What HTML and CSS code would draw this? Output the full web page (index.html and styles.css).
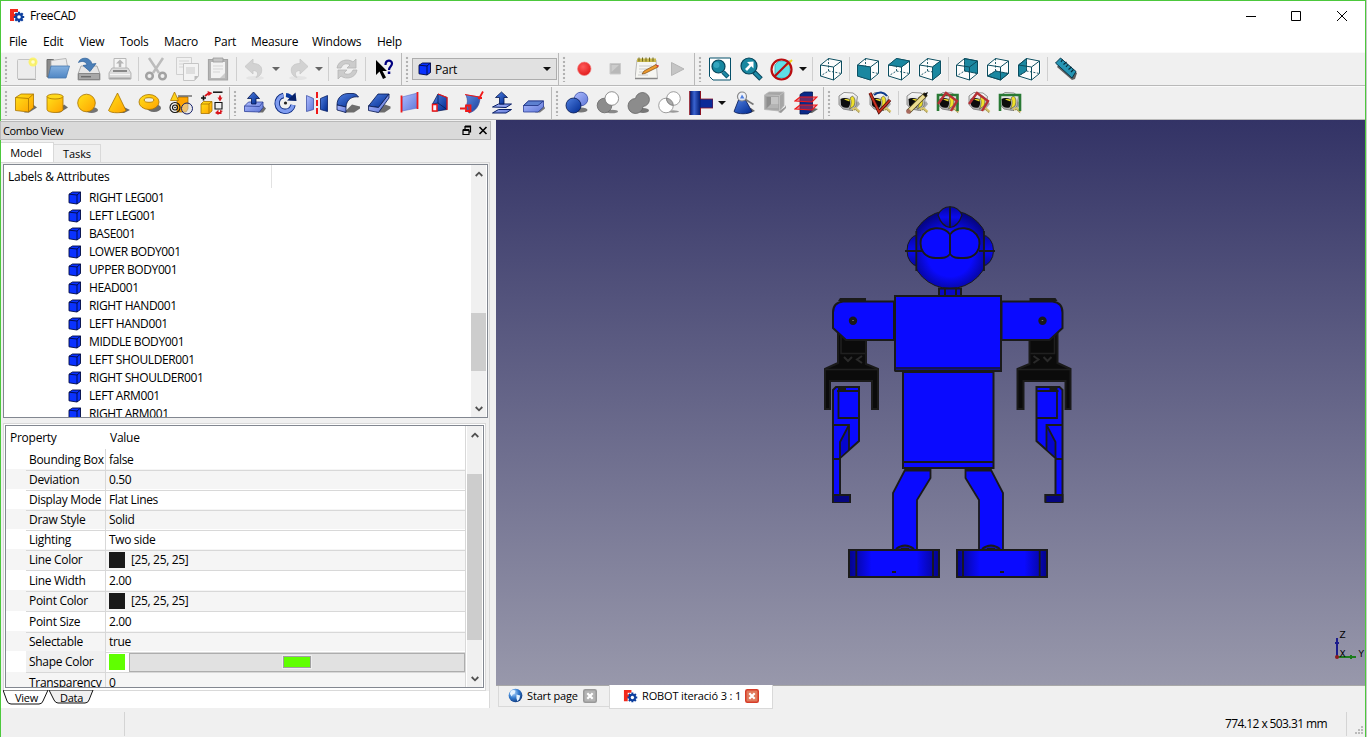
FILE: index.html
```
<!DOCTYPE html>
<html lang="en">
<head>
<meta charset="utf-8">
<title>FreeCAD</title>
<link rel="stylesheet" href="styles.css">
</head>
<body>
<svg class="defs" aria-hidden="true">
  <defs>
    <linearGradient id="gy" x1="0" y1="0" x2="1" y2="1"><stop offset="0" stop-color="#ffe21a"/><stop offset="1" stop-color="#ffa200"/></linearGradient>
    <linearGradient id="gb" x1="0" y1="0" x2="1" y2="1"><stop offset="0" stop-color="#4f7fe0"/><stop offset="1" stop-color="#002a90"/></linearGradient>
    <linearGradient id="gl" x1="0" y1="0" x2="1" y2="1"><stop offset="0" stop-color="#aebcff"/><stop offset="1" stop-color="#5f77d6"/></linearGradient>
    <linearGradient id="gf" x1="0" y1="0" x2="0" y2="1"><stop offset="0" stop-color="#84b1e0"/><stop offset="1" stop-color="#4f86c4"/></linearGradient>
    <linearGradient id="gw" x1="0" y1="0" x2="0" y2="1"><stop offset="0" stop-color="#ffffff"/><stop offset="1" stop-color="#a6a6a6"/></linearGradient>
    <linearGradient id="pipe" x1="0" y1="0" x2="1" y2="0"><stop offset="0" stop-color="#001a70"/><stop offset=".4" stop-color="#3a63d0"/><stop offset="1" stop-color="#001a70"/></linearGradient>
    <radialGradient id="head" gradientUnits="userSpaceOnUse" cx="950" cy="254" r="45"><stop offset="0" stop-color="#0a0aff"/><stop offset=".5" stop-color="#0a0aff"/><stop offset="1" stop-color="#04046a"/></radialGradient>
    <linearGradient id="ear" x1="0" y1="0" x2="0" y2="1"><stop offset="0" stop-color="#0606a0"/><stop offset=".5" stop-color="#0a0aee"/><stop offset="1" stop-color="#0606a0"/></linearGradient>
    <linearGradient id="foot" x1="0" y1="0" x2="1" y2="0"><stop offset="0" stop-color="#040488"/><stop offset=".25" stop-color="#0a0aff"/><stop offset=".75" stop-color="#0a0aff"/><stop offset="1" stop-color="#040488"/></linearGradient>
    <radialGradient id="globe" cx=".35" cy=".3" r=".8"><stop offset="0" stop-color="#b8dcff"/><stop offset=".5" stop-color="#2f78cc"/><stop offset="1" stop-color="#0c2f70"/></radialGradient>
    <radialGradient id="grec" cx=".4" cy=".35" r=".7"><stop offset="0" stop-color="#ff5a5a"/><stop offset="1" stop-color="#e01818"/></radialGradient>
  </defs>
  <symbol id="logo" viewBox="0 0 16 16"><path d="M1 1h8v3H5v2h3v3H5v4H1z" fill="#f22a1c"/><g stroke="#0d3f9e" stroke-width="2.200"><path d="M10 3.800v10.400M4.800 9h10.400M6.300 5.300l7.400 7.400M13.700 5.300l-7.400 7.400"/></g><circle cx="10" cy="9" r="3.900" fill="#0d3f9e"/><circle cx="10" cy="9" r="1.800" fill="#fff"/></symbol>
  <symbol id="cube-s" viewBox="0 0 14 14"><path d="M1 3.200L4.500 1h8v9.500L9 13l-8-1.200z" fill="#0a32ff"/><path d="M1 3.200L4.500 1h8v9.500L9 13l-8-1.200zM1 3.200L9 4l3.500-3M9 4v9" fill="none" stroke="#000a40" stroke-width=".9"/></symbol>

  <symbol id="new" viewBox="0 0 24 24"><rect x="2.500" y="2.500" width="18" height="19.500" rx="1" fill="#ececec" stroke="#c4c4c4"/><path d="M3 22.500h18" stroke="#aaa"/><circle cx="18" cy="5" r="4.500" fill="#fdf35a" opacity=".85"/><circle cx="18" cy="5" r="1.800" fill="#fffdd0"/></symbol>
  <symbol id="open" viewBox="0 0 24 24"><path d="M1 20V2.500h6.500l1 1.500h9v16z" fill="#8a8a8a" stroke="#6c6c6c"/><path d="M5 3.500l15-2 1.500 8H5z" fill="#ececec" stroke="#aaa" stroke-width=".8"/><path d="M5 9h18.500L20 21H2z" fill="url(#gf)" stroke="#4677ac" stroke-width=".8"/></symbol>
  <symbol id="save" viewBox="0 0 24 24"><path d="M4 9h16l3 8v6H1v-6z" fill="#e6e6e6" stroke="#999" stroke-width=".8"/><path d="M1.500 16.500h21V22.500h-21z" fill="#a8a8a8" stroke="#777" stroke-width=".8"/><path d="M4 19.800h10" stroke="#555"/><path d="M1.500 5.500C3 0 13-1 15 7l4-.5-6 8-7-6 4-.7C9 4.500 5 3.500 1.500 5.500z" fill="#4b7fb8" stroke="#2d5f98" stroke-width=".7"/></symbol>
  <symbol id="print" viewBox="0 0 24 24"><path d="M6 1.500h12v10H6z" fill="#f5f5f5" stroke="#b8b8b8"/><path d="M12 10V5" stroke="#b5b5b5" stroke-width="2.500"/><path d="M8 6.500L12 2.500l4 4z" fill="#b5b5b5"/><path d="M4 11h16l3 5v6H1v-6z" fill="#dcdcdc" stroke="#aaa" stroke-width=".8"/><path d="M5 14h14" stroke="#888" stroke-width="2"/><path d="M2 17.500h20" stroke="#f5f5f5"/><path d="M1.500 20.500h21v1.800h-21z" fill="#a5a5a5"/></symbol>
  <symbol id="cut" viewBox="0 0 24 24"><path d="M5 1l10 15M19 1L9 16" stroke="#bcbcbc" stroke-width="2.500"/><ellipse cx="5.500" cy="19" rx="3.300" ry="3.200" fill="none" stroke="#a2a2a2" stroke-width="2.500"/><ellipse cx="18.500" cy="19" rx="3.300" ry="3.200" fill="none" stroke="#a2a2a2" stroke-width="2.500"/></symbol>
  <symbol id="copy" viewBox="0 0 24 24"><path d="M1.500.5h15v17h-15z" fill="#f1f1f1" stroke="#d0d0d0"/><path d="M4 4h10M4 7h4M4 10h4" stroke="#d5d5d5"/><path d="M8.500 6.500h15V19l-4 4.500h-11z" fill="#f3f3f3" stroke="#c5c5c5"/><path d="M11 10h9v7h-9z" fill="#dedede"/><path d="M19.500 23.500V19h4z" fill="#bbb"/></symbol>
  <symbol id="paste" viewBox="0 0 24 24"><path d="M2.500 2.500h19v20.500h-19z" fill="#b6b6b6" stroke="#a5a5a5" stroke-width="1.200"/><path d="M5 5h14v16H5z" fill="#f2f2f2"/><path d="M7 1h10v4H7z" fill="#c5c5c5" stroke="#999" stroke-width=".8"/><path d="M7 9h10M7 12h10M7 15h7" stroke="#d5d5d5"/><path d="M14 21l5-5v5z" fill="#ccc"/></symbol>
  <symbol id="undo" viewBox="0 0 24 24"><ellipse cx="12" cy="21" rx="9" ry="2" fill="#e4e4e4"/><path d="M2 9.500L10 2v4.500c8 0 10 5 8 10-1 2-3 3.500-5 4 2-2 3-7-3-7V17z" fill="#d2d2d2" stroke="#c6c6c6" stroke-width=".8"/></symbol>
  <symbol id="refresh" viewBox="0 0 24 24"><path d="M2 11C3 3 13 1 18 5l3-3v9h-9l3-3c-4-3-8 0-9 3z" fill="#ccc" stroke="#b5b5b5" stroke-width=".8"/><path d="M22 13c-1 8-11 10-16 6l-3 3v-9h9l-3 3c4 3 8 0 9-3z" fill="#ccc" stroke="#b5b5b5" stroke-width=".8"/></symbol>
  <symbol id="whats" viewBox="0 0 24 24"><path d="M4 3v15l3.500-3.500L11 22l3-1.500-3.500-6.500H15z" fill="#000"/><path d="M13.500 8c0-5.500 6.500-5.500 6.500-1.500 0 3-3 3-3 6.500" fill="none" stroke="#000080" stroke-width="2.200"/><path d="M15.800 14.500h2.500V17h-2.500z" fill="#000080"/></symbol>
  <symbol id="rec" viewBox="0 0 24 24"><circle cx="11.300" cy="11.800" r="6.700" fill="url(#grec)" stroke="#f47c7c" stroke-width=".7"/></symbol>
  <symbol id="stop" viewBox="0 0 24 24"><path d="M6 6.500h10.500V17H6z" fill="#b8b8b8" stroke="#cbcbcb"/><path d="M7.500 8h7.500l-7.500 7z" fill="#ccc"/></symbol>
  <symbol id="note" viewBox="0 0 24 24"><path d="M2 3h19l1.500 18.500H0z" fill="#f6f6f2" stroke="#aaa" stroke-width=".8"/><path d="M2 1.500h19V5H2z" fill="#c8b84c"/><path d="M4 .5v4M7.500.5v4M11 .5v4M14.500.5v4M18 .5v4" stroke="#6e671f"/><path d="M4 9h13M4 12h11M4 15h6M3 18h10" stroke="#ccc"/><path d="M0 21.500h22.500" stroke="#888" stroke-width="1.500"/><path d="M21 7.500l2 2.500-13 6.500-3 .5 2-3z" fill="#ee9a2c" stroke="#7a4a12" stroke-width=".7"/><path d="M20.500 7.500L23 10.500l1-2z" fill="#d43a3a"/></symbol>
  <symbol id="play" viewBox="0 0 24 24"><path d="M5.500 5.500L18 12 5.500 18.500z" fill="#c5c5c5" stroke="#b5b5b5"/></symbol>
  <symbol id="fit" viewBox="0 0 24 24"><path d="M1.500 1h21v22H5l-3.500-3.500z" fill="#fff" stroke="#05506a" stroke-width="1"/><path d="M15 15l5 5" stroke="#05506a" stroke-width="4.500"/><path d="M15 15l4.500 4.500" stroke="#1f8aa5" stroke-width="2.500"/><circle cx="10.500" cy="9.500" r="6.500" fill="#1787a0" stroke="#05445a" stroke-width="1.200"/><circle cx="8.500" cy="8" r="3" fill="#45b4cc" opacity=".7"/></symbol>
  <symbol id="fits" viewBox="0 0 24 24"><path d="M15 15l7 7" stroke="#05445a" stroke-width="5"/><path d="M15.500 15.500l6 6" stroke="#1f8aa5" stroke-width="3"/><circle cx="10" cy="9" r="8" fill="#1787a0" stroke="#05445a" stroke-width="1.200"/><path d="M14.500 4.500v7l-2.200-2.200L8 14l-2-2 4.500-4.500L8 5z" fill="#fff"/></symbol>
  <symbol id="draws" viewBox="0 0 24 24"><path d="M5 8l4-4h11v13l-4 4H5z" fill="#5fdfe8" stroke="#3aa8b4" stroke-width=".8"/><path d="M16 9l6-6" stroke="#f4d822" stroke-width="2"/><circle cx="11.500" cy="12.500" r="10" fill="none" stroke="#b90d10" stroke-width="2.200"/><path d="M4.500 19.500L18.500 5.500" stroke="#b90d10" stroke-width="2.200"/></symbol>
  <symbol id="wire" viewBox="0 0 24 24"><path d="M9.500 1.500V14l-8 5M9.500 14l13 2.500" fill="none" stroke="#0b4c5e" stroke-width=".9" stroke-dasharray="2 1.500"/><path d="M1.500 8l13 2v13l-13-4zM9.500 1.500l13 2.500-8 6M1.500 8l8-6.500M22.500 4v12.500l-8 6.500" fill="none" stroke="#0b4c5e"/></symbol>
  <symbol id="ruler" viewBox="0 0 24 24"><path d="M3 10l4-6 16 12-2 6-3 1z" fill="#111" opacity=".65"/><path d="M1.500 6L6.500 1 22 14.500 18 21z" fill="#2695b4" stroke="#08374a"/><path d="M7 5l1.500-2.500M9.500 7.500L12.500 5M12 10l2-2.500M14.500 12.500l3-2.500M17 15l2.500-2.500" stroke="#062a38" stroke-width="1.100"/></symbol>

  <symbol id="box" viewBox="0 0 24 24"><path d="M10 21.500l9-8 4 3-8 5z" fill="#555" opacity=".85"/><path d="M1.500 6.500L7 3h12.500v13.500l-5 4.500-13-1.500z" fill="url(#gy)" stroke="#a87400" stroke-width=".8"/><path d="M1.500 6.500l13 1L19.500 3M14.500 7.500V21" fill="none" stroke="#a87400" stroke-width=".8"/></symbol>
  <symbol id="cyl" viewBox="0 0 24 24"><path d="M11 21.500l8-8 4 3-8 5z" fill="#555" opacity=".85"/><path d="M2 5.500v13c0 4 16 4 16 0v-13z" fill="url(#gy)" stroke="#a87400" stroke-width=".8"/><ellipse cx="10" cy="5.500" rx="8" ry="2.500" fill="#ffd81a" stroke="#a87400" stroke-width=".8"/></symbol>
  <symbol id="sph" viewBox="0 0 24 24"><ellipse cx="15.500" cy="19" rx="6.500" ry="3" fill="#555" opacity=".8"/><circle cx="10.500" cy="12" r="8.800" fill="url(#gy)" stroke="#a87400" stroke-width=".8"/></symbol>
  <symbol id="cone" viewBox="0 0 24 24"><path d="M12 22l5-6 6 3-6 3z" fill="#555" opacity=".85"/><path d="M10.500 2L1.500 19.500c2 3 15 3 17.500 0z" fill="url(#gy)" stroke="#a87400" stroke-width=".8"/></symbol>
  <symbol id="torus" viewBox="0 0 24 24"><ellipse cx="16" cy="17" rx="7" ry="4" fill="#555" opacity=".85"/><ellipse cx="11" cy="11" rx="10" ry="7.500" fill="url(#gy)" stroke="#a87400" stroke-width=".8"/><ellipse cx="11" cy="9" rx="4.800" ry="2.300" fill="#f1efe0" stroke="#a87400" stroke-width=".8"/></symbol>
  <symbol id="prims" viewBox="0 0 24 24"><path d="M8 7.500L10 6h9v12l-2 3H8z" fill="#ffa400" stroke="#8a5e00" stroke-width=".7"/><path d="M5.500 1L1.500 9.500h8z" fill="#ffd21a" stroke="#a87400" stroke-width=".8"/><path d="M9 5h14" stroke="#333"/><circle cx="6" cy="16.500" r="5" fill="none" stroke="#111" stroke-width="1.100"/><circle cx="6" cy="16.500" r="2.500" fill="none" stroke="#111" stroke-width="1.100"/><circle cx="6" cy="16.500" r=".8"/><circle cx="18" cy="17.500" r="5.500" fill="#ddd" fill-opacity=".5" stroke="#15206a"/></symbol>
  <symbol id="builder" viewBox="0 0 24 24"><path d="M1 13l2.500-2.500H12v9.500L9 22.500H1z" fill="url(#gy)" stroke="#a87400" stroke-width=".8"/><path d="M1 13h8l3-2.500M9 13v9.500" fill="none" stroke="#a87400" stroke-width=".8"/><path d="M3.500 4.500v5M1 7h5" stroke="#111" stroke-width="1.600"/><path d="M5 5l4-3M20 4.500v4M21.500 22h-4" stroke="#d8151c" stroke-width="1.800"/><path d="M7.500 0l5 2-4 3zM17.500 6.500h5L20 10.500zM18.500 18.500V24L15 22zM20 19l3 1-3 2z" fill="#d8151c"/><path d="M13 1.200h9.500" stroke="#111" stroke-width="1.500"/><path d="M15 11.500h7V18h-7z" fill="none" stroke="#111" stroke-width="1.100"/></symbol>
  <symbol id="extrude" viewBox="0 0 24 24"><path d="M15 21.500l5-7 3 3-3 4z" fill="#555" opacity=".85"/><path d="M1.500 15l4-4H20v5.500l-3.500 4.500-15-.5z" fill="url(#gl)" stroke="#2c3f98" stroke-width=".8"/><path d="M1.500 15l15 .5L20 11" fill="none" stroke="#2c3f98" stroke-width=".8"/><path d="M10.500 1l6 6.500H13V13H8.500V7.500H4.500z" fill="url(#gb)" stroke="#04154e" stroke-width=".8"/></symbol>
  <symbol id="revolve" viewBox="0 0 24 24"><path d="M9.500 4.500A8 8 0 1 0 19 14" fill="none" stroke="#0b2a80" stroke-width="5.500"/><path d="M9.500 4.500A8 8 0 1 0 19 14" fill="none" stroke="#7f9cf0" stroke-width="3.700"/><path d="M12 4a8 8 0 0 1 6.500 4.500" fill="none" stroke="#0b3aa0" stroke-width="4"/><path d="M13 9.500l8.500-8L22.500 10z" fill="#05206a"/><circle cx="11.500" cy="12" r="1.600" fill="#222"/></symbol>
  <symbol id="mirror" viewBox="0 0 24 24"><path d="M1.500 4.500l7 3v11l-7 2z" fill="url(#gl)" stroke="#4054a8" stroke-width=".8"/><path d="M22.500 4.500l-7 3v11l7 2z" fill="url(#gb)" stroke="#081f66" stroke-width=".8"/><path d="M12 1v6m0 2v6m0 2v6" stroke="#f01818" stroke-width="2"/></symbol>
  <symbol id="fillet" viewBox="0 0 24 24"><path d="M8 21.500l8-8 8 2v2l-6 4z" fill="#555" opacity=".85"/><path d="M1 14C1 6 7 2.500 12 2.500h5c2 0 4 1 5.500 3.500-6-1-12 2-12.500 10z" fill="url(#gb)" stroke="#04154e" stroke-width=".8"/><path d="M1 14l9 2v5.500l-9-2.500z" fill="url(#gl)" stroke="#04154e" stroke-width=".8"/></symbol>
  <symbol id="chamfer" viewBox="0 0 24 24"><path d="M9 21.500l9-8 5.500 2v2l-6 4z" fill="#555" opacity=".85"/><path d="M1.500 15L11 3h11L11.500 16.500z" fill="url(#gb)" stroke="#04154e" stroke-width=".8"/><path d="M1.500 15l10 1.500L22 3v4L11.500 21.500l-10-2z" fill="url(#gl)" stroke="#04154e" stroke-width=".8"/></symbol>
  <symbol id="face" viewBox="0 0 24 24"><path d="M4 6l15.500-4v15L4 20z" fill="url(#gl)" stroke="#5b6fc8" stroke-width=".6"/><path d="M3.500 4.500v17M19.500 1v17" stroke="#f01818" stroke-width="1.800"/></symbol>
  <symbol id="loft" viewBox="0 0 24 24"><path d="M3.500 13L9 3l9 3.500v12L8.500 20h-5z" fill="url(#gb)" stroke="#04154e" stroke-width=".7"/><path d="M9 3v9L3.500 13M9 12l9 6.500" fill="none" stroke="#04154e" stroke-width=".7"/><path d="M18 6v13M9 3l9 3.500" stroke="#f01818" stroke-width="1.200"/><path d="M3.500 13.500H8V20H3.500z" fill="#f6f6ff" stroke="#f01818" stroke-width="1.500"/></symbol>
  <symbol id="sweep" viewBox="0 0 24 24"><path d="M6 4l14 2c0 8-4 14-11 16l-4-6c3-3 3-7 1-12z" fill="url(#gb)" stroke="#2a3f90" stroke-width=".7" opacity=".9"/><path d="M5 3.500l14 2.500M9.500 22l-1-8" stroke="#f01818"/><path d="M0 17.500h5m1-3h4.500V20H6zM19 8l1.500-3L23 .5M18 7h4" fill="none" stroke="#f01818" stroke-width="1.800"/></symbol>
  <symbol id="offset" viewBox="0 0 24 24"><path d="M1.500 22l6-3.500h13L15 22zM1.500 16l6-3h13L15 16.500z" fill="url(#gl)" stroke="#081f66"/><path d="M10.500 1l6 5.500H13V13H8.500V6.500H4.500z" fill="url(#gb)" stroke="#04154e" stroke-width=".8"/></symbol>
  <symbol id="thick" viewBox="0 0 24 24"><path d="M13 21.500l7-8 3 3v1l-5 4z" fill="#666" opacity=".85"/><path d="M1.500 14.500l5-4.500h15v6l-5.500 5H1.500z" fill="url(#gl)" stroke="#2c3f98" stroke-width=".8"/><path d="M1.500 14.500l5-4.500h15L16 14.500z" fill="#5d80d0" stroke="#1c2f80" stroke-width=".8"/></symbol>
  <symbol id="bool" viewBox="0 0 24 24"><ellipse cx="16" cy="19" rx="6.500" ry="2.500" fill="#777"/><circle cx="16" cy="8" r="6.800" fill="url(#gl)" stroke="#384ca6" stroke-width=".8"/><circle cx="8.500" cy="14.500" r="7.500" fill="url(#gb)" stroke="#04154e" stroke-width=".8"/></symbol>
  <symbol id="bcut" viewBox="0 0 24 24"><ellipse cx="16" cy="20.500" rx="6" ry="1.800" fill="#888"/><circle cx="8.500" cy="14.500" r="7.300" fill="#8c8c8c" stroke="#666" stroke-width=".8"/><circle cx="15.800" cy="7.500" r="6.800" fill="#fff" stroke="#777" stroke-width=".8"/></symbol>
  <symbol id="union" viewBox="0 0 24 24"><ellipse cx="16" cy="19.500" rx="6" ry="2.500" fill="#777"/><path d="M8.500 7.500A7 7 0 1 1 16 15.500 7.500 7.500 0 1 1 8.500 7.500z" fill="#8c8c8c" stroke="#666" stroke-width=".8"/></symbol>
  <symbol id="inter" viewBox="0 0 24 24"><ellipse cx="15" cy="20.500" rx="6" ry="1.200" fill="#999"/><circle cx="8" cy="14.500" r="7.300" fill="#fff" stroke="#888" stroke-width=".8"/><circle cx="15.500" cy="7.500" r="6.800" fill="#fff" stroke="#888" stroke-width=".8"/><path d="M8.500 7.200A7.300 7.300 0 0 1 15.300 14.300 6.800 6.800 0 0 1 8.500 7.200z" fill="#aaa" stroke="#777" stroke-width=".8"/></symbol>
  <symbol id="join" viewBox="0 0 24 24"><path d="M9 8h15v9H9z" fill="#0a2a98" stroke="#8a1122" stroke-width=".8"/><path d="M1 0h10.500v24H1z" fill="url(#pipe)"/><path d="M.7 0v24M11.500 0v8M11.500 17v7" stroke="#8a1122"/></symbol>
  <symbol id="check" viewBox="0 0 24 24"><path d="M12 22l7-5 4 3-5 2z" fill="#666"/><path d="M6.500 9h7L20 20.500c-3 3-15 3-18 0z" fill="url(#gb)" stroke="#04154e" stroke-width=".8"/><circle cx="10" cy="5.500" r="4.500" fill="#eef2fa" fill-opacity=".85" stroke="#888" stroke-width="1.200"/><path d="M10 3.500l2.500 4H8z" fill="#4f7fe0"/><path d="M13.500 8.500l8 5" stroke="#777" stroke-width="1.600"/></symbol>
  <symbol id="defeat" viewBox="0 0 24 24"><path d="M15 21l7-5 1-2v3l-5 5z" fill="#999"/><path d="M1.500 4L6 1h15v13.500L16.500 20l-15-1.500z" fill="#a6a6a6" stroke="#b5b5b5" stroke-width=".8"/><path d="M3.500 6h12v11.500h-12z" fill="#8e8e8e"/><path d="M8 6h7.500v7H8z" fill="#c5c5c5"/><path d="M3.500 17.500L8 13h7.500v4.500z" fill="#b4b4b4"/><path d="M1.500 4l15 .5L21 1M16.500 4.500V20" fill="none" stroke="#c4c4c4" stroke-width=".8"/></symbol>
  <symbol id="section" viewBox="0 0 24 24"><path d="M14 22l6-5 4 1-6 4z" fill="#666"/><path d="M6 3.500L10 1h8.500v18L14 23H6z" fill="#0a2a88" stroke="#04154e" stroke-width=".8"/><path d="M1 10l5-4h17l-5 5zM1 18l5-4h17l-5 5z" fill="#c92b4a" fill-opacity=".5" stroke="#f01818" stroke-width="1.200"/></symbol>
  <symbol id="tape" viewBox="0 0 24 24"><path d="M13 19l8-9 2 3-5 6z" fill="#888" opacity=".7"/><path d="M2 5l5-3.500 9 .5 4.500 3.500L19 15l-4.500 4.500L6 18l-4-4.500z" fill="url(#gw)" stroke="#777" stroke-width=".8"/><path d="M15.500 5q4 3 1.500 10l-4.500 3q3-7 .5-11z" fill="#f0e22a" stroke="#444" stroke-width=".6"/><path d="M3.500 8c2.500-1.500 6-1 9 0 1 3 1 6-1 8.500-4 1-6.500-.5-7.500-2.500z" fill="#0c0c0c"/><path d="M7 8.500c2-.8 4-.5 5.500 0v2z" fill="#e8da2a"/><path d="M15 18.500l3.500-1 4 3.500" fill="none" stroke="#d8c46a" stroke-width="2.500"/><path d="M15 19.500l3.500-1 4 3.500" fill="none" stroke="#555" stroke-width=".9" stroke-dasharray="1 1.500"/></symbol>
</svg>

<div class="window">
  <header class="titlebar">
    <svg class="logo"><use href="#logo"/></svg><span class="app-name">FreeCAD</span>
    <svg class="winbtns" viewBox="0 0 110 14"><path d="M1 7.500h10M46.500 2.500h9v9h-9zM92 2l10 10M102 2L92 12" fill="none" stroke="#000"/></svg>
  </header>
  <nav class="menubar"><span>File</span><span>Edit</span><span>View</span><span>Tools</span><span>Macro</span><span>Part</span><span>Measure</span><span>Windows</span><span>Help</span></nav>

  <div class="toolrow">
    <div class="tools g1"><i class="grip wide"></i>
      <svg class="ic"><use href="#new"/></svg><svg class="ic"><use href="#open"/></svg><svg class="ic"><use href="#save"/></svg><svg class="ic"><use href="#print"/></svg><i class="sep narrow"></i>
      <svg class="ic"><use href="#cut"/></svg><svg class="ic"><use href="#copy"/></svg><svg class="ic"><use href="#paste"/></svg><i class="sep"></i>
      <svg class="ic"><use href="#undo"/></svg><i class="drop dim"></i><svg class="ic flip"><use href="#undo"/></svg><i class="drop dim"></i><i class="sep"></i>
      <svg class="ic"><use href="#refresh"/></svg><i class="sep"></i><svg class="ic"><use href="#whats"/></svg>
    </div>
    <div class="tools g2"><i class="grip wide"></i><div class="combo"><svg class="cube"><use href="#cube-s"/></svg><span>Part</span><i class="drop"></i></div></div>
    <div class="tools g3"><i class="grip wide"></i><svg class="ic"><use href="#rec"/></svg><svg class="ic"><use href="#stop"/></svg><svg class="ic"><use href="#note"/></svg><svg class="ic"><use href="#play"/></svg></div>
    <div class="tools last"><i class="grip"></i>
      <svg class="ic"><use href="#fit"/></svg><svg class="ic"><use href="#fits"/></svg><svg class="ic"><use href="#draws"/></svg><i class="drop"></i><i class="sep"></i>
      <svg class="ic" viewBox="0 0 24 24"><path class="halo" d="M1.500 8l8-6.500 13 2.500v12.500l-8 6.500-13-4z"/><use href="#wire"/></svg><i class="sep"></i>
      <svg class="ic" viewBox="0 0 24 24"><path class="halo" d="M1.500 8l8-6.500 13 2.500v12.500l-8 6.500-13-4z"/><use href="#wire"/><path class="teal" d="M1.500 8l13 2v13l-13-4z"/></svg>
      <svg class="ic" viewBox="0 0 24 24"><path class="halo" d="M1.500 8l8-6.500 13 2.500v12.500l-8 6.500-13-4z"/><use href="#wire"/><path class="teal" d="M1.500 8l8-6.500 13 2.500-8 6z"/></svg>
      <svg class="ic" viewBox="0 0 24 24"><path class="halo" d="M1.500 8l8-6.500 13 2.500v12.500l-8 6.500-13-4z"/><use href="#wire"/><path class="teal" d="M14.500 10l8-6v12.500l-8 6.500z"/></svg><i class="sep"></i>
      <svg class="ic" viewBox="0 0 24 24"><path class="halo" d="M1.500 8l8-6.500 13 2.500v12.500l-8 6.500-13-4z"/><path class="teal" d="M9.500 1.500l13 2.500v12.500L9.500 14z"/><use href="#wire"/></svg>
      <svg class="ic" viewBox="0 0 24 24"><path class="halo" d="M1.500 8l8-6.500 13 2.500v12.500l-8 6.500-13-4z"/><path class="teal" d="M1.500 19l8-5 13 2.500-8 6.500z"/><use href="#wire"/></svg>
      <svg class="ic" viewBox="0 0 24 24"><path class="halo" d="M1.500 8l8-6.500 13 2.500v12.500l-8 6.500-13-4z"/><path class="teal" d="M1.500 8l8-6.500V14l-8 5z"/><use href="#wire"/></svg><i class="sep"></i>
      <svg class="ic"><use href="#ruler"/></svg>
    </div>
  </div>
  <div class="toolrow second">
    <div class="tools h1"><i class="grip"></i><svg class="ic"><use href="#box"/></svg><svg class="ic"><use href="#cyl"/></svg><svg class="ic"><use href="#sph"/></svg><svg class="ic"><use href="#cone"/></svg><svg class="ic"><use href="#torus"/></svg><svg class="ic"><use href="#prims"/></svg><svg class="ic"><use href="#builder"/></svg></div>
    <div class="tools h2"><i class="grip"></i><svg class="ic"><use href="#extrude"/></svg><svg class="ic"><use href="#revolve"/></svg><svg class="ic"><use href="#mirror"/></svg><svg class="ic"><use href="#fillet"/></svg><svg class="ic"><use href="#chamfer"/></svg><svg class="ic"><use href="#face"/></svg><svg class="ic"><use href="#loft"/></svg><svg class="ic"><use href="#sweep"/></svg><svg class="ic"><use href="#offset"/></svg><svg class="ic"><use href="#thick"/></svg></div>
    <div class="tools h3"><i class="grip"></i><svg class="ic"><use href="#bool"/></svg><svg class="ic"><use href="#bcut"/></svg><svg class="ic"><use href="#union"/></svg><svg class="ic"><use href="#inter"/></svg><svg class="ic"><use href="#join"/></svg><i class="drop"></i><svg class="ic"><use href="#check"/></svg><svg class="ic"><use href="#defeat"/></svg><svg class="ic"><use href="#section"/></svg></div>
    <div class="tools last"><i class="grip"></i><svg class="ic"><use href="#tape"/></svg>
      <svg class="ic" viewBox="0 0 24 24"><use href="#tape"/><path d="M6 4c5-4 10-3 13 1" fill="none" stroke="#0c3a8c" stroke-width="2"/><path d="M2 2l9 19L22 9" fill="none" stroke="#4a0c08" stroke-width="3.200"/><path d="M2 2l9 19L22 9" fill="none" stroke="#c8311f" stroke-width="1.800"/></svg><i class="sep"></i>
      <svg class="ic" viewBox="0 0 24 24"><use href="#tape"/><path d="M3 21L21 3" stroke="#4e4420" stroke-width="5"/><path d="M4.500 19.500L19 5" stroke="#ecdc90" stroke-width="3.600"/><path d="M18 3l5-2-2 5z" fill="#111"/><circle cx="3.500" cy="20.500" r="2.300" fill="#a86a5e"/></svg>
      <svg class="ic" viewBox="0 0 24 24"><use href="#tape"/><path d="M2 20V4h19.500v16" fill="none" stroke="#2a7a35" stroke-width="2.600"/><path d="M2 13L10 2l11 8-6 10" fill="none" stroke="#b53035" stroke-width="2.400"/></svg>
      <svg class="ic" viewBox="0 0 24 24"><use href="#tape"/><path d="M2 13L10 2l11 8-6 10" fill="none" stroke="#b53035" stroke-width="2.400"/></svg>
      <svg class="ic" viewBox="0 0 24 24"><use href="#tape"/><path d="M2 20V4h20v16" fill="none" stroke="#2a7a35" stroke-width="2.600"/></svg>
    </div>
  </div>

  <main class="work">
    <aside class="dock">
      <div class="dock-title"><span>Combo View</span><svg viewBox="0 0 26 11" class="dock-btns"><path d="M1 5h6v4.500H1zM3 4V1.500h5.500V7H7" fill="none" stroke="#000" stroke-width="1.200"/><path d="M1 5h6M3 1.500h6" stroke="#000" stroke-width="2"/><path d="M17.500 2l7 7M24.500 2l-7 7" stroke="#000" stroke-width="1.600"/></svg></div>
      <div class="tabs"><span class="tab on">Model</span><span class="tab">Tasks</span></div>
      <div class="pane">
        <section class="tree">
          <div class="tree-main">
            <div class="tree-head">Labels &amp; Attributes</div>
            <ul>
              <li><svg class="cube"><use href="#cube-s"/></svg>RIGHT LEG001</li>
              <li><svg class="cube"><use href="#cube-s"/></svg>LEFT LEG001</li>
              <li><svg class="cube"><use href="#cube-s"/></svg>BASE001</li>
              <li><svg class="cube"><use href="#cube-s"/></svg>LOWER BODY001</li>
              <li><svg class="cube"><use href="#cube-s"/></svg>UPPER BODY001</li>
              <li><svg class="cube"><use href="#cube-s"/></svg>HEAD001</li>
              <li><svg class="cube"><use href="#cube-s"/></svg>RIGHT HAND001</li>
              <li><svg class="cube"><use href="#cube-s"/></svg>LEFT HAND001</li>
              <li><svg class="cube"><use href="#cube-s"/></svg>MIDDLE BODY001</li>
              <li><svg class="cube"><use href="#cube-s"/></svg>LEFT SHOULDER001</li>
              <li><svg class="cube"><use href="#cube-s"/></svg>RIGHT SHOULDER001</li>
              <li><svg class="cube"><use href="#cube-s"/></svg>LEFT ARM001</li>
              <li><svg class="cube"><use href="#cube-s"/></svg>RIGHT ARM001</li>
            </ul>
          </div>
          <div class="scroll tree-scroll"><svg viewBox="0 0 8 6"><path d="M.7 5L4 1.700 7.300 5"/></svg><b></b><svg viewBox="0 0 8 6"><path d="M.7 1L4 4.300 7.300 1"/></svg></div>
        </section>
        <div class="props-frame">
          <section class="props">
            <div class="props-main">
              <div class="phead"><span>Property</span><span>Value</span></div>
              <div class="prow"><span>Bounding Box</span><span>false</span></div>
              <div class="prow alt"><span>Deviation</span><span>0.50</span></div>
              <div class="prow"><span>Display Mode</span><span>Flat Lines</span></div>
              <div class="prow alt"><span>Draw Style</span><span>Solid</span></div>
              <div class="prow"><span>Lighting</span><span>Two side</span></div>
              <div class="prow alt tall"><span>Line Color</span><span><i class="swatch"></i>[25, 25, 25]</span></div>
              <div class="prow"><span>Line Width</span><span>2.00</span></div>
              <div class="prow alt tall"><span>Point Color</span><span><i class="swatch"></i>[25, 25, 25]</span></div>
              <div class="prow"><span>Point Size</span><span>2.00</span></div>
              <div class="prow alt"><span>Selectable</span><span>true</span></div>
              <div class="prow tall active"><span>Shape Color</span><span><i class="swatch green"></i><i class="colorbtn"><i></i></i></span></div>
              <div class="prow alt"><span>Transparency</span><span>0</span></div>
            </div>
            <div class="scroll props-scroll"><svg viewBox="0 0 8 6"><path d="M.7 5L4 1.700 7.300 5"/></svg><b></b><svg viewBox="0 0 8 6"><path d="M.7 1L4 4.300 7.300 1"/></svg></div>
          </section>
        </div>
        <div class="subtabs">
          <svg viewBox="0 0 100 17"><path d="M46 0l5 10q1.500 3 4 3h27q3 0 4-3l4-10z" fill="#f0f0f0" stroke="#111"/><path d="M0 0l4 11q1 3 4 3h28q3 0 4-3l5-11z" fill="#fff" stroke="#111"/></svg>
          <span>View</span><span>Data</span>
        </div>
      </div>
    </aside>

    <section class="mdi">
      <svg class="scene" viewBox="496 120 869 565">
        <defs>
          <clipPath id="headclip"><path d="M916 200h68v100h-68z"/></clipPath>
          <g id="arm">
            <path d="M838 301l2-3h26v4z" fill="#1a1a1a"/>
            <path d="M838 330h28v34l12 5v40h-6v-28h-42v28h-5v-40l13-6z" fill="#0b0b0b" stroke="#1a1a1a" stroke-width="2"/>
            <path d="M841 334v19.500h24M825 369.500h53" fill="none" stroke="#202020" stroke-width="1.500"/>
            <path d="M844 357l4 4 4-4M862 356l-5 3.500 5 3.500" fill="none" stroke="#2a2a2a" stroke-width="2"/>
            <path d="M894 301.500h-51q-10 1-10 11V328l13 12h48z" fill="#0a0aff" stroke="#1a1a1a" stroke-width="2"/>
            <circle cx="853" cy="320.800" r="4.200" fill="#1a1a1a"/><path d="M852.300 320.500h1.500" stroke="#777"/>
            <path d="M833 390l3-3h23v54l-19 17v37h10v7h-17z" fill="#0a0aff" stroke="#1a1a1a" stroke-width="2"/>
            <path d="M840 442l9-17v24l-9 8z" fill="#0505cd"/><path d="M834 495h16v7h-16z" fill="#050580"/>
            <path d="M838.500 391v27H859M837 391h22M833 425h16v25M849 425l-9 17v16M833 459h7M833 495h17v7M833 502v-8" fill="none" stroke="#1a1a1a" stroke-width="1.800"/><path d="M838 388.500h8" stroke="#1a1a1a" stroke-width="3"/>
          </g>
          <g id="leg">
            <path d="M905 470h25.500v8L917 500v50h-24v-57z" fill="#0a0aff" stroke="#1a1a1a" stroke-width="1.800"/><path d="M905 470h25" stroke="#1a1a1a" stroke-width="3"/>
            <path d="M896 549q9-7 18 0M901 549h8" fill="#1010aa" stroke="#1a1a1a" stroke-width="2"/>
            <path d="M849 550h90v27h-90z" fill="url(#foot)" stroke="#1a1a1a" stroke-width="2"/><path d="M856.300 550v27M933 550v27" stroke="#1a1a1a" stroke-width="1.800"/><path d="M892 572h4" stroke="#1a1a1a" stroke-width="2"/>
          </g>
        </defs>
        <g fill="url(#head)" stroke="#1a1a1a" stroke-width="1.500">
          <ellipse cx="918" cy="250.500" rx="11" ry="15.500" fill="url(#ear)" stroke-width="1"/><ellipse cx="982" cy="250.500" rx="11.500" ry="15.500" fill="url(#ear)" stroke-width="1"/>
          <circle cx="950" cy="249.500" r="39" clip-path="url(#headclip)" stroke-width="1"/>
          <path d="M938 215c5-11 19-11 24 0-2 6-6 12-12 12.500-6-.5-10-6.500-12-12.500z" fill="url(#ear)" stroke-width="1.200"/>
          <path d="M950 206.500v21M916.300 231v40M984 231v40" stroke-width="1.800"/>
          <path d="M950 234.500C944 226 927 225 921 239c-2 10 3 19 15 19 8 0 11 0 14-4zM950 234.500c6-8.500 23-9.500 29 4.500 2 10-3 19-15 19-8 0-11 0-14-4z" fill="#0a0aff" stroke-width="1.900"/>
          <path d="M905 251h17M979 251h16" stroke-width="1.900"/>
        </g>
        <path d="M939 288.500h22v8h-22zM945 288v8M956 288v8" fill="#0808c8" stroke="#1a1a1a" stroke-width="2"/>
        <use href="#arm"/><use href="#arm" transform="translate(1895.500 0) scale(-1 1)"/>
        <path d="M895 296h106v74.500H895z" fill="#0a0aff" stroke="#1a1a1a" stroke-width="2"/><path d="M895 368h106" stroke="#1a1a1a" stroke-width="1.500"/>
        <path d="M903 372h90.500v96H903z" fill="#0a0aff" stroke="#1a1a1a" stroke-width="2"/><path d="M903 462h90M895 371h107" stroke="#1a1a1a" stroke-width="2"/>
        <use href="#leg"/><use href="#leg" transform="translate(1896 0) scale(-1 1)"/>
        <path d="M1337 657v-19" stroke="#1c1c8c" stroke-width="2"/><path d="M1337 657h19" stroke="#1c7c1c" stroke-width="2"/><path d="M1335 643h4" stroke="#1c1c8c" stroke-width="2"/><path d="M1351 655v4" stroke="#1c7c1c" stroke-width="2"/><circle cx="1337" cy="657" r="2" fill="#8c1c1c"/>
        <g class="axis"><text x="1339.500" y="638">Z</text><text x="1339.500" y="657">X</text><text x="1358.500" y="657">Y</text></g>
      </svg>
      <div class="doctabs">
        <div class="doctab"><svg class="dt-ic" viewBox="0 0 16 16"><circle cx="8" cy="8" r="7.300" fill="url(#globe)"/><path d="M3 3q3-2 5 0l-1 3-2 1-1 2-2-3zM9 7l4 1-1 4-2 2-1-3z" fill="#e4f3ff"/></svg><span class="t1">Start page</span><svg class="close" viewBox="0 0 14 14"><rect x=".75" y=".75" width="12.500" height="12.500" rx="1.500" fill="#b4b4b4" stroke="#999" stroke-width="1.500"/><path d="M4.300 4.300l5.400 5.400M9.700 4.300L4.300 9.700" stroke="#fff" stroke-width="2.200"/></svg></div>
        <div class="doctab on"><svg class="dt-ic"><use href="#logo"/></svg><span class="t2">ROBOT iteració 3 : 1</span><svg class="close" viewBox="0 0 14 14"><rect x=".75" y=".75" width="12.500" height="12.500" rx="1.500" fill="#e07a5c" stroke="#d63c28" stroke-width="1.500"/><path d="M4.300 4.300l5.400 5.400M9.700 4.300L4.300 9.700" stroke="#fff" stroke-width="2.200"/></svg></div>
      </div>
    </section>
  </main>
  <footer class="status"><i class="sdiv first"></i><span>774.12 x 503.31 mm</span><i class="sdiv"></i><svg viewBox="0 0 9 9" class="sizegrip"><path d="M6 0h2v2H6zM3 3h2v2H3zM6 3h2v2H6zM0 6h2v2H0zM3 6h2v2H3zM6 6h2v2H6z" fill="#bbb"/></svg></footer>
</div>
</body>
</html>
```
FILE: styles.css
```
* { box-sizing: border-box; }
body { margin: 0; width: 1367px; height: 737px; overflow: hidden; background: #c8c8c8; font: 12px/16px "Open Sans", "Noto Sans", sans-serif; letter-spacing: -0.25px; color: #000; }
i { font-style: normal; flex: none; }
svg { flex: none; display: block; }
.defs { position: absolute; width: 0; height: 0; }
.window { width: 1366px; height: 737px; border: 1px solid #4cc83c; border-bottom: 0; background: #f0f0f0; display: flex; flex-direction: column; }

.titlebar { height: 29px; background: #fff; display: flex; align-items: center; padding: 0 16px 0 8px; }
.logo { width: 16px; height: 16px; }
.app-name { margin-left: 5px; flex: 1; letter-spacing: -0.35px; }
.winbtns { width: 110px; height: 14px; margin-right: -6px; }
.menubar { height: 22px; background: #fff; display: grid; grid-template-columns: 34px 36px 41px 44px 50px 37px 61px 65px auto; align-items: center; padding: 1px 0 0 8px; }

.toolrow { height: 34px; display: flex; border-bottom: 1px solid #b9b9b9; border-top: 1px solid #fafafa; }
.tools { display: flex; align-items: center; border-right: 1px solid #b9b9b9; flex: none; }
.tools.last { border: 0; flex: 1; }
.g1 { width: 401px; } .g2 { width: 157px; } .g3 { width: 136px; }
.h1 { width: 229px; } .h2 { width: 322px; } .h3 { width: 272px; }
.ic { width: 24px; height: 24px; margin: 0 3.5px; }
.flip { transform: scaleX(-1); }
.halo { fill: #fcfcfc; stroke: #fcfcfc; stroke-width: 2; }
.teal { fill: #1a87a0; stroke: #0b4c5e; stroke-width: 0.8; }
.grip { width: 9px; height: 26px; background: radial-gradient(circle, #b2b2b2 1.2px, transparent 1.6px) 3px 0 / 4px 4px repeat-y; }
.grip.wide { width: 10px; }
.sep { width: 6px; height: 24px; background: linear-gradient(#cfcfcf, #cfcfcf) 3px 0 / 1px 100% no-repeat; }
.sep.narrow { width: 5px; }
.drop { width: 12px; height: 4px; display: flex; justify-content: center; }
.drop::before { content: ""; border: 4px solid transparent; border-top-color: #111; border-bottom: 0; }
.drop.dim::before { border-top-color: #666; }
.combo { width: 145px; height: 22px; background: #e1e1e1; border: 1px solid #adadad; display: flex; align-items: center; padding-left: 5px; }
.combo span { flex: 1; margin: 1px 0 0 3px; }
.combo .drop { width: 18px; }
.cube { width: 14px; height: 14px; }

.work { height: 590px; display: flex; }
.dock { width: 495px; padding-top: 1px; }
.dock-title { width: 491px; height: 19px; margin-left: -1px; background: #dadada; border: 1px solid #b9b9b9; display: flex; align-items: center; justify-content: space-between; padding: 0 2px 0 2px; font-size: 11px; letter-spacing: -0.35px; }
.dock-btns { width: 26px; height: 11px; }
.tabs { display: flex; align-items: flex-end; height: 22px; padding-top: 3px; }
.tab { width: 47px; height: 18px; border: 1px solid #d9d9d9; border-left: 0; border-bottom: 0; text-align: center; line-height: 18px; font-size: 11px; letter-spacing: -0.1px; }
.tab.on { width: 53px; height: 20px; background: #fff; padding-right: 2px; line-height: 19px; }
.pane { width: 489px; height: 546px; border: 1px solid #d9d9d9; border-left: 0; padding: 1px 0 0 2px; }
.tree { width: 485px; height: 254px; border: 1px solid #828790; background: #fff; display: flex; overflow: hidden; }
.tree-main { width: 467px; }
.tree-head { width: 268px; height: 23px; border-right: 1px solid #e2e2e2; padding: 4px 0 0 4px; }
ul { list-style: none; margin: 1px 0 0; padding: 0 0 0 64px; }
li { height: 18px; display: flex; align-items: center; gap: 7px; letter-spacing: -0.4px; white-space: nowrap; }
.scroll { background: #f0f0f0; display: flex; flex-direction: column; align-items: center; }
.scroll svg { width: 8px; height: 6px; }
.scroll path { fill: none; stroke: #505050; stroke-width: 1.8; }
.scroll b { background: #cdcdcd; width: 100%; }
.tree-scroll { width: 15px; padding-top: 6px; }
.tree-scroll b { height: 58px; margin: 136px 0 35px; }
.props-frame { width: 483px; height: 268px; margin-top: 5px; border: 1px solid #d9d9d9; padding: 1px; background: #fff; }
.props { height: 263px; border: 1px solid #828790; background: #fff; display: flex; overflow: hidden; }
.props-main { width: 460px; border-right: 1px solid #d8d8d8; overflow: hidden; height: 261px; }
.phead { display: grid; grid-template-columns: 100px 1fr; height: 23px; align-items: center; padding: 1px 0 0 4px; }
.prow { height: 20px; display: grid; grid-template-columns: 80px 1fr; padding-left: 20px; line-height: 20px; white-space: nowrap; letter-spacing: -0.35px; }
.prow span { border-bottom: 1px solid #d8d8d8; padding: 1px 0 0 3px; display: flex; align-items: center; }
.prow span:first-child { border-right: 1px solid #d8d8d8; letter-spacing: -0.3px; }
.prow.alt { background: #f5f5f5; }
.prow.tall { height: 21px; }
.prow.active span:first-child { background: #f0f0f0; }
.swatch { width: 16px; height: 16px; background: #191919; margin-right: 6px; }
.swatch.green { background: #60ff00; margin-right: 4px; }
.colorbtn { flex: 1; height: 19px; background: #e1e1e1; border: 1px solid #adadad; display: flex; align-items: center; justify-content: center; }
.colorbtn i { width: 28px; height: 12px; background: #60ff00; border: 1px solid #a0a0a0; outline: 1px solid #eee; }
.props-scroll { width: 15px; padding-top: 6px; margin-left: 1px; }
.props-scroll b { height: 166px; margin: 36px 0; }
.subtabs { position: relative; height: 17px; background: #fff; margin-left: -2px; display: flex; padding-left: 14px; font-size: 11px; line-height: 13px; gap: 21px; }
.subtabs svg { position: absolute; left: 2px; top: -1px; width: 100px; height: 17px; }
.subtabs span { position: relative; width: 24px; }

.mdi { width: 869px; }
.scene { width: 869px; height: 565px; background: linear-gradient(#333366, #9898ab); }
.axis { font: 9px "DejaVu Sans", sans-serif; letter-spacing: 0; }
.doctabs { display: flex; align-items: flex-start; border-top: 1px solid #a8a8a8; height: 25px; padding-left: 2px; font-size: 11px; letter-spacing: -0.15px; }
.doctab { width: 111px; height: 21px; border: 1px solid #d9d9d9; border-top: 0; border-right: 0; display: flex; align-items: center; padding: 0 0 1px 9px; white-space: nowrap; }
.doctab.on { width: 164px; height: 24px; border-right: 1px solid #d9d9d9; background: #fff; padding-left: 13px; margin-top: -1px; }
.dt-ic { width: 15px; height: 15px; }
.t1 { width: 52px; margin: 0 4px 0 4px; }
.t2 { width: 99px; margin: 0 4px; }
.close { width: 14px; height: 14px; }
.status { flex: 1; display: flex; align-items: center; justify-content: flex-end; }
.sdiv { width: 1px; height: 24px; background: #d4d4d4; }
.sdiv.first { margin: 0 auto 0 123px; }
.status span { margin-right: 19px; letter-spacing: -0.6px; }
.sizegrip { width: 9px; height: 9px; margin: 14px 1px 0 8px; }
```
